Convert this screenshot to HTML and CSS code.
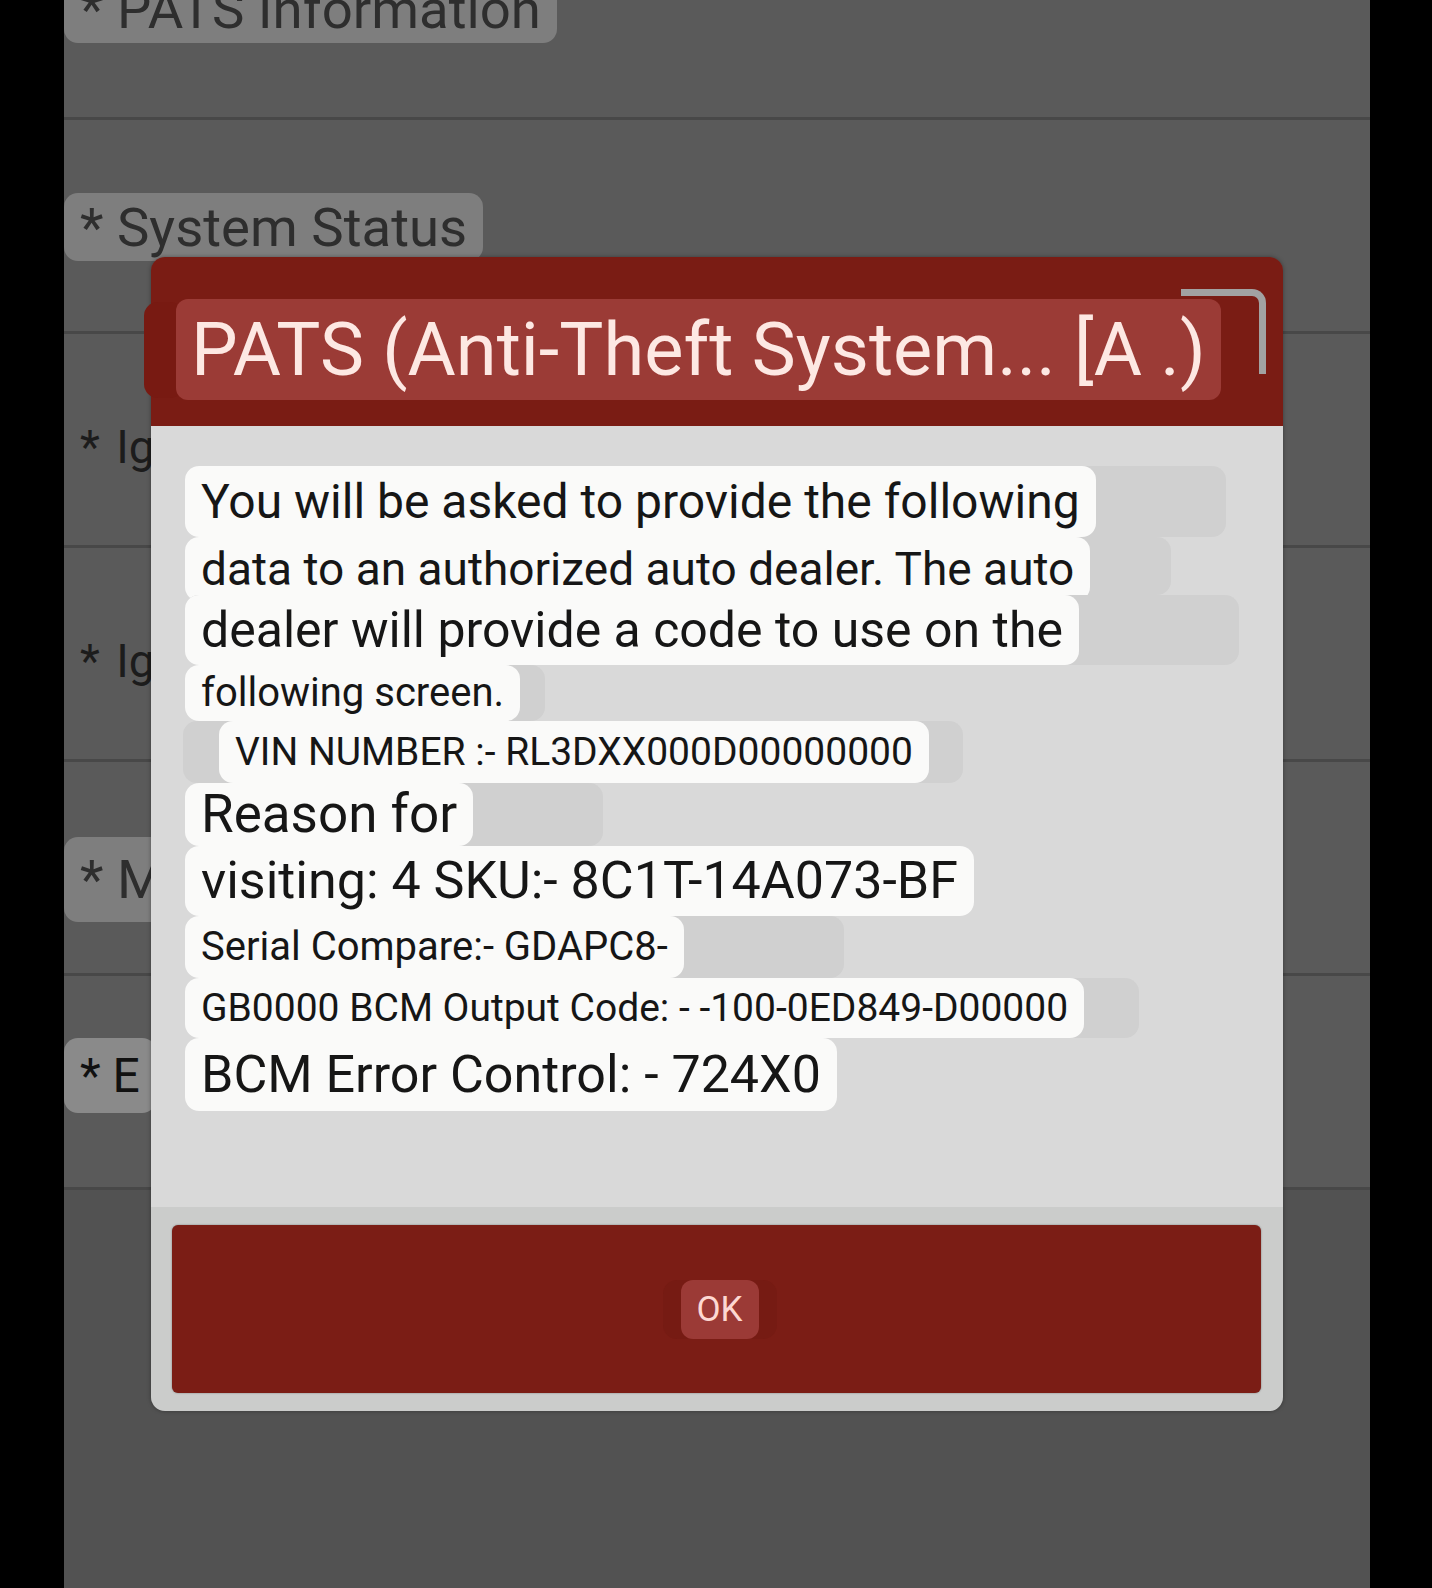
FILE: index.html
```html
<!DOCTYPE html>
<html lang="en">
<head>
  <meta charset="UTF-8" />
  <title>PATS</title>
  <link rel="stylesheet" href="styles.css">
</head>
<body>

<div class="screen">
  <div class="form">
    <div class="row row-first"><span class="label top">* PATS Information</span></div>
    <div class="row"><span class="label">* System Status</span></div>
    <div class="row low"><span class="plain">* Ig</span></div>
    <div class="row low"><span class="plain">* Ig</span></div>
    <div class="row"><span class="label tall">* M</span></div>
    <div class="row high"><span class="label light">* E</span></div>
    <div class="row last"></div>
  </div>

  <div class="dialog">
    <div class="dialog-head">
      <div class="title-row">
        <span class="bump"></span>
        <span class="title">PATS (Anti-Theft System... [A .)</span>
      </div>
      <span class="corner"></span>
    </div>

    <div class="dialog-body">
      <div class="ghost tail-l"><span class="chip f48 h71">You will be asked to provide the following</span></div>
      <div class="ghost tail-m short"><span class="chip f46 h58">data to an authorized auto dealer. The auto</span></div>
      <div class="ghost tail-xl"><span class="chip f50 h70">dealer will provide a code to use on the</span></div>
      <div class="ghost tail-xs"><span class="chip f40 h56">following screen.</span></div>
      <div class="ghost vin"><span class="chip f39 h62">VIN NUMBER :- RL3DXX000D00000000</span></div>
      <div class="ghost tail-l short"><span class="chip f53 h63">Reason for</span></div>
      <div class="ghost"><span class="chip f52 h70">visiting: 4 SKU:- 8C1T-14A073-BF</span></div>
      <div class="ghost tail-xl"><span class="chip f40 h62">Serial Compare:- GDAPC8-</span></div>
      <div class="ghost tail-s"><span class="chip f39 h60">GB0000 BCM Output Code: - -100-0ED849-D00000</span></div>
      <div class="ghost"><span class="chip f52 h73">BCM Error Control: - 724X0</span></div>
    </div>

    <div class="dialog-foot">
      <div class="ok-btn">
        <span class="ok-back"><span class="ok">OK</span></span>
      </div>
    </div>
  </div>
</div>

</body>
</html>
```

FILE: styles.css
```css
body { margin: 0; background: #000; font-family: Roboto, "Noto Sans", Arial, sans-serif; }

.screen {
  position: relative;
  width: 1306px;
  height: 1588px;
  margin-left: 64px;
  background: #5a5a5a;
  overflow: hidden;
}

/* background form rows */
.row {
  height: 214px;
  box-sizing: border-box;
  padding-top: 73px;
  border-bottom: 3px solid #484848;
  display: flex;
  align-items: flex-start;
}
.row-first { height: 120px; padding-top: 0; }
.row.low { padding-top: 83px; }
.row.high { padding-top: 62px; }
.row.last { height: 420px; border: none; background: #525252; }

.label {
  display: inline-block;
  padding: 0 16px;
  line-height: 68px;
  font-size: 54.5px;
  color: #2e2e2e;
  background: #7e7e7e;
  border-radius: 14px;
}
.label.top { margin-top: -25px; }
.label.tall { line-height: 85px; margin-top: 2px; }
.label.light { line-height: 75px; font-size: 48px; color: #111; background: #8a8a8a; }
.plain { padding: 0 16px; font-size: 46px; line-height: 60px; word-spacing: 5px; color: #1c1c1c; }

/* dialog */
.dialog {
  position: absolute;
  left: 87px;
  top: 257px;
  width: 1132px;
  height: 1154px;
  display: flex;
  flex-direction: column;
  border-radius: 14px;
  box-shadow: 0 0 4px rgba(0, 0, 0, 0.35);
}

.dialog-head {
  position: relative;
  height: 169px;
  box-sizing: border-box;
  padding-top: 42px;
  background: #7a1c14;
  border-radius: 14px 14px 0 0;
}
.title-row { display: flex; align-items: center; margin-left: -7px; }
.bump { width: 40px; height: 96px; background: #781a12; border-radius: 14px; }
.title {
  margin-left: -8px;
  padding: 0 15px;
  height: 101px;
  line-height: 101px;
  font-size: 74px;
  color: #fde8e3;
  background: #9b3b36;
  border-radius: 12px;
  white-space: nowrap;
}
.corner {
  position: absolute;
  top: 32px;
  right: 17px;
  width: 85px;
  height: 85px;
  box-sizing: border-box;
  border-top: 7px solid #a2a2a2;
  border-right: 7px solid #a2a2a2;
  border-top-right-radius: 14px;
}

.dialog-body {
  flex: 1;
  background: #d9d9d9;
  padding: 40px 0 0 34px;
  display: flex;
  flex-direction: column;
  align-items: flex-start;
}
.ghost { display: flex; background: #d0d0d0; border-radius: 14px; }
.ghost.short { align-items: flex-start; }
.tail-xs { padding-right: 25px; }
.tail-s { padding-right: 55px; }
.tail-m { padding-right: 81px; }
.tail-l { padding-right: 130px; }
.tail-xl { padding-right: 160px; }
.ghost.vin { padding: 0 34px 0 36px; margin-left: -2px; }

.chip {
  display: block;
  padding: 0 16px;
  background: #fafaf9;
  border-radius: 14px;
  color: #161616;
  white-space: nowrap;
}
.f39 { font-size: 39px; }
.f40 { font-size: 40px; }
.f46 { font-size: 46px; }
.f48 { font-size: 48px; }
.f50 { font-size: 50px; }
.f52 { font-size: 52px; }
.f53 { font-size: 53px; }
.h56 { line-height: 56px; }
.h58 { line-height: 58px; }
.h60 { line-height: 60px; }
.h62 { line-height: 62px; }
.h63 { line-height: 63px; }
.h70 { line-height: 70px; }
.h71 { line-height: 71px; }
.h73 { line-height: 73px; }
.ghost.short .h58 { line-height: 64px; margin-bottom: -6px; }

.dialog-foot {
  height: 204px;
  box-sizing: border-box;
  padding: 18px 22px 18px 21px;
  background: #cbcccb;
  border-radius: 0 0 14px 14px;
}
.ok-btn {
  height: 100%;
  display: flex;
  justify-content: center;
  align-items: center;
  background: #7b1d15;
  border-radius: 6px;
  box-shadow: 0 0 2px rgba(0, 0, 0, 0.4);
}
.ok-back { display: flex; padding: 0 18px; margin-left: 6px; background: #761b13; border-radius: 14px; }
.ok {
  width: 78px;
  height: 59px;
  line-height: 59px;
  text-align: center;
  font-size: 35px;
  color: #fdd8d2;
  background: #9b3a36;
  border-radius: 12px;
}
```
